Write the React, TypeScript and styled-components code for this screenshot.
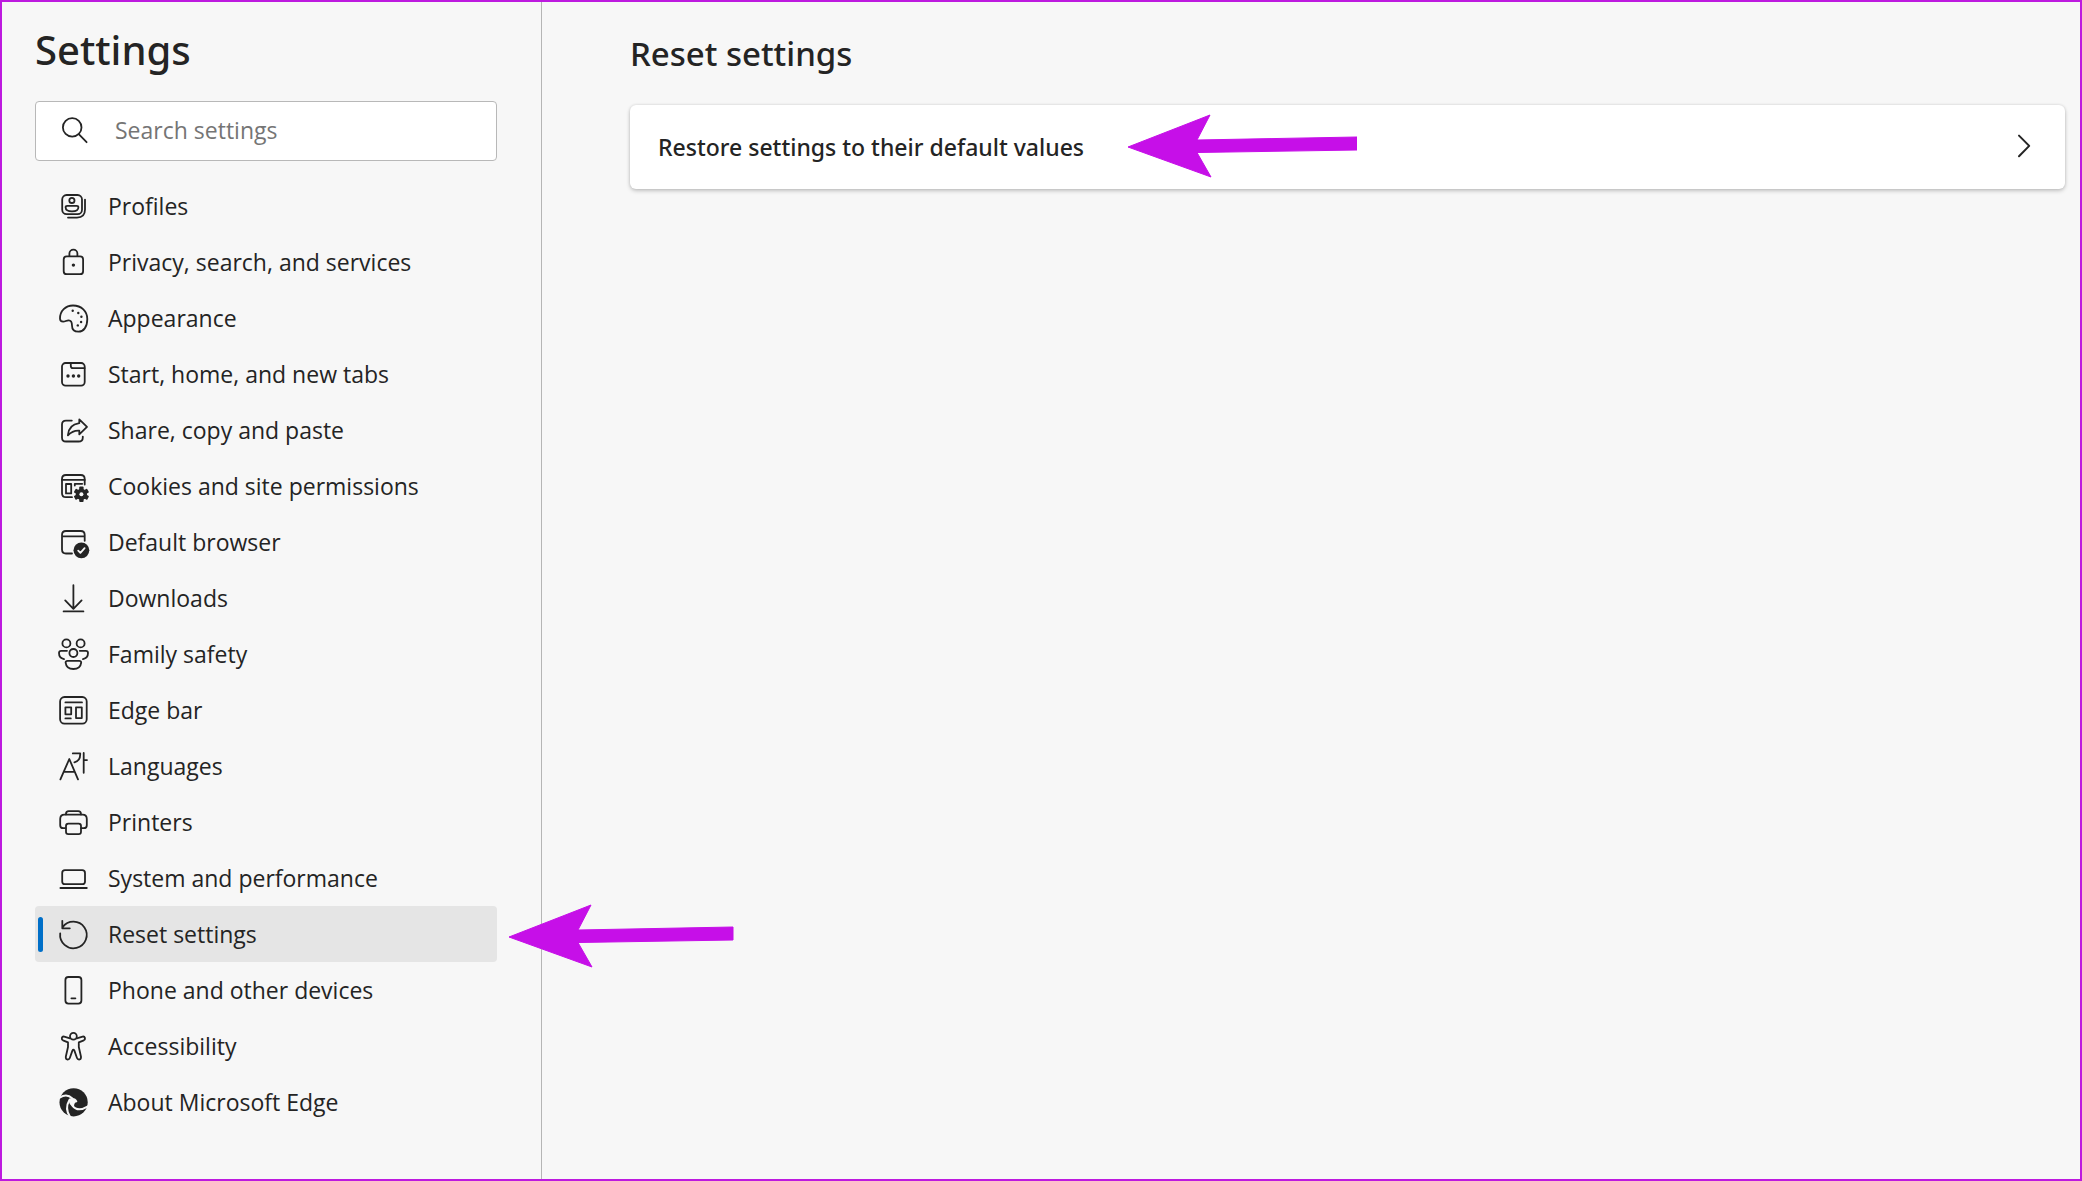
import React from "react";
import styled, { createGlobalStyle } from "styled-components";

const ACCENT = "#c60fe8";

const GlobalStyle = createGlobalStyle`
  *, *::before, *::after { box-sizing: border-box; }
  body {
    margin: 0;
    background: #f7f7f7;
    color: #242424;
    font-family: "Open Sans", "Noto Sans", sans-serif;
    font-size: 23px;
  }
`;

const Page = styled.div`
  display: flex;
  min-height: 100vh;
  border: 2px solid #bd1adf;
`;

const Sidebar = styled.aside`
  flex: 0 0 540px;
  padding: 20px 44px 32px 33px;
  border-right: 1px solid #b5b5b5;
`;

const Title = styled.h1`
  margin: 0 0 23px;
  font-family: "Noto Sans", sans-serif;
  font-size: 40px;
  line-height: 56px;
  font-weight: 500;
`;

const SearchBox = styled.label`
  display: flex;
  align-items: center;
  height: 60px;
  padding: 0 20px 0 22px;
  gap: 25px;
  background: #fff;
  border: 1px solid #b8b8b8;
  border-radius: 4px;
`;

const SearchInput = styled.input`
  flex: 1;
  min-width: 0;
  padding: 0 0 2px;
  border: 0;
  outline: 0;
  background: transparent;
  color: inherit;
  font: inherit;
  &::placeholder { color: #757575; opacity: 1; }
`;

const NavList = styled.ul`
  list-style: none;
  margin: 17px 0 0;
  padding: 0;
`;

const NavLink = styled.a<{ $active?: boolean }>`
  position: relative;
  display: flex;
  align-items: center;
  gap: 19px;
  height: 56px;
  padding-left: 22px;
  border-radius: 4px;
  background: ${(p) => (p.$active ? "#e5e5e5" : "transparent")};
  color: inherit;
  text-decoration: none;
  white-space: nowrap;
  &::before {
    content: "";
    display: ${(p) => (p.$active ? "block" : "none")};
    position: absolute;
    left: 3px;
    top: 11px;
    width: 5px;
    height: 35px;
    border-radius: 3px;
    background: #006fc8;
  }
`;

const Icon = styled.svg`
  flex: none;
  width: 32px;
  height: 32px;
  fill: none;
  stroke: #242424;
  stroke-width: 1.8;
  stroke-linecap: round;
  stroke-linejoin: round;
  overflow: visible;
  .solid { fill: #242424; stroke: none; }
  .cut { stroke: #f7f7f7; }
`;

const Main = styled.main`
  flex: 1;
  min-width: 0;
  padding: 28px 15px 32px 88px;
`;

const SectionTitle = styled.h2`
  margin: 0 0 27px;
  font-family: "Noto Sans", sans-serif;
  font-size: 33px;
  line-height: 48px;
  font-weight: 500;
`;

const Card = styled.button`
  display: flex;
  align-items: center;
  width: 100%;
  height: 84px;
  padding: 0 25px 0 28px;
  border: 0;
  border-radius: 6px;
  background: #fff;
  box-shadow: 0 2px 4px rgba(0, 0, 0, 0.2), 0 0 3px rgba(0, 0, 0, 0.12);
  color: inherit;
  font-family: "Noto Sans", sans-serif;
  font-size: 23px;
  font-weight: 500;
  text-align: left;
`;

const CardLabel = styled.span`
  flex: 1;
`;

const CardArea = styled.div`
  position: relative;
`;

const Arrow = styled.svg<{ $left: number; $top: number }>`
  position: absolute;
  z-index: 1;
  left: ${(p) => p.$left}px;
  top: ${(p) => p.$top}px;
  width: 230px;
  height: 64px;
  fill: ${ACCENT};
  stroke: ${ACCENT};
  stroke-linejoin: round;
  pointer-events: none;
`;

const Pointer = ({ left, top, length }: { left: number; top: number; length: number }) => (
  <Arrow $left={left} $top={top} viewBox="0 0 230 64" aria-hidden="true">
    <path d={`M1 33 L83 1 L70 26 L${length} 23 V36 L70 38.5 L84 63 Z`} />
  </Arrow>
);

const gear = Array.from({ length: 6 }, (_, i) => (
  <rect key={i} className="solid" x="22.2" y="16.6" width="4.4" height="5" rx="1" transform={`rotate(${i * 60} 24.4 24.3)`} />
));

const items: { label: string; active?: boolean; icon: React.ReactNode }[] = [
  {
    label: "Profiles",
    icon: (
      <>
        <rect x="5.2" y="5" width="19.8" height="19.2" rx="4.4" />
        <circle cx="14.9" cy="10.4" r="2.6" />
        <path d="M10.3 15.8H19.7Q21.4 15.8 21.4 17.2Q21.4 21.4 15 21.4Q8.6 21.4 8.6 17.2Q8.6 15.8 10.3 15.8Z" />
        <path d="M28 9.6V19.6Q28 27.6 20 27.6H11" />
      </>
    ),
  },
  {
    label: "Privacy, search, and services",
    icon: (
      <>
        <rect x="6.7" y="10.4" width="19.4" height="17.8" rx="3" />
        <path d="M12.4 10.2V7.6a4 4 0 0 1 8 0V10.2" />
        <circle className="solid" cx="16.4" cy="19.1" r="1.7" />
      </>
    ),
  },
  {
    label: "Appearance",
    icon: (
      <>
        <path d="M3 16.5C3 9 8.5 3.5 16 3.5C24.5 3.5 30.3 9.5 30.3 17C30.3 25 26.5 29.7 21.5 29.7C17 29.7 15 27 15 23.5C15 20 14.3 18.3 11.7 18.3C9.3 18.3 8.4 19.7 6.2 19.7C4 19.7 3 18.6 3 16.5Z" />
        <g className="solid">
          <circle cx="15.7" cy="8.8" r="1.2" />
          <circle cx="21.3" cy="11" r="1.2" />
          <circle cx="24.4" cy="14.8" r="1.2" />
          <circle cx="24.1" cy="20" r="1.2" />
          <circle cx="20.8" cy="23.4" r="1.2" />
        </g>
      </>
    ),
  },
  {
    label: "Start, home, and new tabs",
    icon: (
      <>
        <rect x="5" y="5" width="22.7" height="22.7" rx="3.6" />
        <path d="M13.8 5V8Q13.8 10.2 16 10.2H27.5" />
        <g className="solid">
          <circle cx="11" cy="18" r="1.7" />
          <circle cx="16.4" cy="18" r="1.7" />
          <circle cx="21.7" cy="18" r="1.7" />
        </g>
      </>
    ),
  },
  {
    label: "Share, copy and paste",
    icon: (
      <>
        <path d="M14.8 6.6H9Q5 6.6 5 10.6V23.4Q5 27.5 9 27.5H21.5Q25.8 27.5 25.8 23.4V22.6" />
        <path d="M22.3 5.4L30 12.9L22.3 20.4V16.6Q15.5 16.2 10.9 21.4Q11.6 10.6 22.3 9.2Z" />
      </>
    ),
  },
  {
    label: "Cookies and site permissions",
    icon: (
      <>
        <path d="M15 27.2H9Q5 27.2 5 23.2V9Q5 5 9 5H23.7Q27.7 5 27.7 9V14.6" />
        <path d="M5 9.9H27.7M17.8 13.8H25.2M17.8 13.8V15.6" />
        <rect x="9" y="14" width="5.2" height="9.4" />
        <circle className="solid" cx="24.4" cy="24.3" r="5.6" />
        {gear}
        <circle cx="24.4" cy="24.3" r="2" fill="#f7f7f7" stroke="none" />
      </>
    ),
  },
  {
    label: "Default browser",
    icon: (
      <>
        <path d="M15 27.5H9Q5 27.5 5 23.5V9Q5 5 9 5H23.7Q27.7 5 27.7 9V14.8M5 10.3H27.7" />
        <circle className="solid" cx="24.4" cy="24.3" r="7.9" />
        <path className="cut" d="M21.2 24.6L23.4 26.8L27.6 22.2" />
      </>
    ),
  },
  {
    label: "Downloads",
    icon: <path d="M16.4 3.2V26.6M8.2 18.4L16.4 26.8L24.6 18.4M6.6 29.4H26.4" />,
  },
  {
    label: "Family safety",
    icon: (
      <>
        <circle cx="9.4" cy="5.4" r="4" />
        <circle cx="23.6" cy="5.4" r="4" />
        <circle cx="16.4" cy="15" r="4" />
        <path d="M10 12.8H4.2Q2 12.8 2 15Q2 20 7 21.2M22.8 12.8H28.8Q31 12.8 31 15Q31 20 26 21.2" />
        <path d="M10.6 22.8H22.2Q24.2 22.8 24.2 24.6Q23.4 31 16.4 31Q9.4 31 8.6 24.6Q8.6 22.8 10.6 22.8Z" />
      </>
    ),
  },
  {
    label: "Edge bar",
    icon: (
      <>
        <rect x="3.1" y="3" width="26.6" height="26.6" rx="4.4" />
        <path d="M8.4 8.4H25M8.4 24.4H13.8" />
        <rect x="8.4" y="13.3" width="5.8" height="7" />
        <rect x="19" y="13.3" width="5.8" height="10.8" />
      </>
    ),
  },
  {
    label: "Languages",
    icon: (
      <path d="M3.4 29.4L12.3 9L21 29.4M6.8 21.8H17.8M15.8 3.4H23.2Q23.6 11 17.4 12.4M26.7 3V22.8M26.7 10.1H30" />
    ),
  },
  {
    label: "Printers",
    icon: (
      <>
        <path d="M8.6 22.2H6.2Q3.2 22.2 3.2 19.2V13Q3.2 8.6 7.4 8.6H25.6Q29.8 8.6 29.8 13V19.2Q29.8 22.2 26.8 22.2H24.2" />
        <path d="M8.9 8.4Q8.9 5.2 11.8 5.2H21.2Q24 5.2 24 8.4" />
        <rect x="9" y="17.6" width="15" height="10.6" rx="2.4" />
      </>
    ),
  },
  {
    label: "System and performance",
    icon: (
      <>
        <rect x="5.2" y="8.2" width="22.8" height="14" rx="2.8" />
        <path d="M3.4 26H29.8" />
      </>
    ),
  },
  {
    label: "Reset settings",
    active: true,
    icon: <path d="M3.2 15.4A13.3 13.3 0 1 0 5.6 9.2M5.3 2.8V10.3H12.8" />,
  },
  {
    label: "Phone and other devices",
    icon: (
      <>
        <rect x="8.4" y="3" width="16" height="26.6" rx="3" />
        <path d="M14.4 24.3H18.4" />
      </>
    ),
  },
  {
    label: "Accessibility",
    icon: (
      <>
        <circle cx="16.4" cy="6.2" r="3.4" />
        <path d="M13 8.4L7.2 6.6Q5.4 6.2 4.8 8Q4.6 9.6 6 10.3L11 12.4V17L8.8 26.8Q8.6 29 10.4 29.5Q12.2 29.7 12.8 28L15.4 20.6Q16.4 18.8 17.4 20.6L20 28Q20.6 29.7 22.4 29.5Q24.2 29 24 26.8L21.8 17V12.4L26.8 10.3Q28.2 9.6 28 8Q27.4 6.2 25.6 6.6L19.8 8.4" />
      </>
    ),
  },
  {
    label: "About Microsoft Edge",
    icon: (
      <>
        <circle className="solid" cx="16.6" cy="16.3" r="14.1" />
        <g className="cut" strokeWidth="2">
          <path d="M2.6 11.8Q9.6 7 15.4 12.4" />
          <path d="M12.4 14Q7.4 22.6 13 30.8" />
          <path d="M15.4 19.6Q20.6 26.6 31 20.4" />
        </g>
        <path className="cut" fill="#f7f7f7" d="M12.8 13.4Q17.6 11.6 19.4 15.4Q16.4 15.8 16.2 19.8Q12.6 18.6 12.8 13.4Z" />
      </>
    ),
  },
];

export default function App() {
  return (
    <>
      <GlobalStyle />
      <Page>
        <Sidebar>
          <Title>Settings</Title>
          <SearchBox>
            <Icon viewBox="0 0 32 32" aria-hidden="true">
              <circle cx="14.2" cy="12.4" r="9.3" />
              <path d="M21 19.4L28.6 27.2" />
            </Icon>
            <SearchInput type="search" placeholder="Search settings" aria-label="Search settings" />
          </SearchBox>
          <nav aria-label="Settings">
            <NavList>
              {items.map((item) => (
                <li key={item.label}>
                  <NavLink href="#" $active={item.active} aria-current={item.active ? "page" : undefined}>
                    <Icon viewBox="0 0 32 32" aria-hidden="true">{item.icon}</Icon>
                    {item.label}
                    {item.active && <Pointer left={473} top={-2} length={225} />}
                  </NavLink>
                </li>
              ))}
            </NavList>
          </nav>
        </Sidebar>
        <Main>
          <SectionTitle>Reset settings</SectionTitle>
          <CardArea>
            <Card type="button">
              <CardLabel>Restore settings to their default values</CardLabel>
              <Icon viewBox="0 0 32 32" aria-hidden="true">
                <path d="M11 4.6L21.2 14.9L11 25.2" strokeWidth="2" />
              </Icon>
            </Card>
            <Pointer left={497} top={9} length={230} />
          </CardArea>
        </Main>
      </Page>
    </>
  );
}
